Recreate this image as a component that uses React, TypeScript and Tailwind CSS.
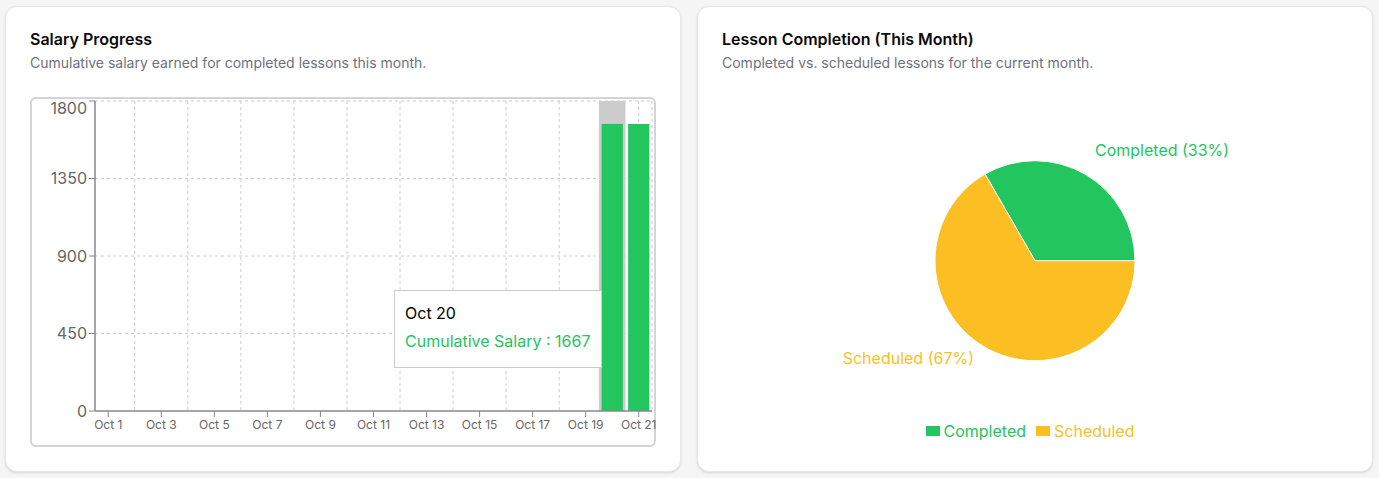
import React from "react";

const GREEN = "#22c55e";
const YELLOW = "#fbbf24";

// chart geometry (svg coords inside the bordered box)
const AXIS_X = 63;
const TOP = 2;
const BOTTOM = 312;
const RIGHT = 620;
const DAYS = 21;
const BAND = (RIGHT - AXIS_X) / DAYS;
const MAX = 1800;

const center = (i: number) => AXIS_X + (i + 0.5) * BAND;
const yOf = (v: number) => BOTTOM - (v / MAX) * (BOTTOM - TOP);

const salary: { [day: number]: number } = { 20: 1667, 21: 1667 };

function SalaryChart() {
  const yTicks = [0, 450, 900, 1350, 1800];
  const gridX = [1, 3, 5, 7, 9, 11, 13, 15, 17, 19, 20].map(center);
  const barW = BAND * 0.8;

  return (
    <div className="relative h-[350px] w-full rounded-md border-2 border-[#d4d4d8]">
      <svg width={622} height={346} className="block overflow-visible">
        {/* grid */}
        {yTicks.filter(t => t > 0).map(t => (
          <line key={t} x1={AXIS_X} x2={RIGHT} y1={yOf(t)} y2={yOf(t)} stroke="#ccc" strokeDasharray="3 3" />
        ))}
        {gridX.map((x, i) => (
          <line key={i} x1={x} x2={x} y1={TOP} y2={BOTTOM} stroke="#ccc" strokeDasharray="3 3" />
        ))}
        <line x1={RIGHT} x2={RIGHT} y1={TOP} y2={BOTTOM} stroke="#ccc" strokeDasharray="3 3" />

        {/* hover cursor */}
        <rect x={AXIS_X + 19 * BAND} y={TOP} width={BAND} height={BOTTOM - TOP} fill="#ccc" />

        {/* bars */}
        {Object.entries(salary).map(([day, v]) => {
          const i = Number(day) - 1;
          return (
            <rect key={day} x={center(i) - barW / 2} y={yOf(v)} width={barW} height={BOTTOM - yOf(v)} fill={GREEN} />
          );
        })}

        {/* y axis */}
        <line x1={AXIS_X} x2={AXIS_X} y1={TOP} y2={BOTTOM} stroke="#888" strokeWidth={1.5} />
        {yTicks.map(t => (
          <g key={t}>
            <line x1={AXIS_X - 6} x2={AXIS_X} y1={yOf(t)} y2={yOf(t)} stroke="#888" />
            <text
              x={55}
              y={t === MAX ? 9 : yOf(t)}
              dy="0.355em"
              textAnchor="end"
              fontSize={16}
              fill="#666"
            >
              {t}
            </text>
          </g>
        ))}

        {/* x axis */}
        <line x1={AXIS_X} x2={RIGHT} y1={BOTTOM} y2={BOTTOM} stroke="#888" strokeWidth={1.5} />
        {Array.from({ length: 11 }, (_, k) => k * 2).map(i => (
          <g key={i}>
            <line x1={center(i)} x2={center(i)} y1={BOTTOM} y2={BOTTOM + 6} stroke="#888" />
            <text x={center(i)} y={325.5} dy="0.355em" textAnchor="middle" fontSize={12} fill="#666">
              Oct {i + 1}
            </text>
          </g>
        ))}
      </svg>

      {/* tooltip */}
      <div className="absolute left-[362px] top-[191px] whitespace-nowrap border border-[#ccc] bg-white px-[10px] pb-[14px] pt-[10px] text-base">
        <p className="leading-6 text-black">Oct 20</p>
        <p className="pt-1 leading-6 text-[#22c55e]">Cumulative Salary : 1667</p>
      </div>
    </div>
  );
}

function CompletionPie() {
  const cx = 313;
  const cy = 163.7;
  const r = 100;
  const ax = cx + r * Math.cos((2 * Math.PI) / 3);
  const ay = cy - r * Math.sin((2 * Math.PI) / 3);

  return (
    <div className="flex h-[350px] flex-col">
      <svg width="100%" height={322} className="block">
        <path d={`M${cx},${cy} L${cx + r},${cy} A${r},${r} 0 0,0 ${ax},${ay} Z`} fill={GREEN} stroke="#fff" />
        <path d={`M${cx},${cy} L${ax},${ay} A${r},${r} 0 1,0 ${cx + r},${cy} Z`} fill={YELLOW} stroke="#fff" />
        <text x={373} y={53.5} dy="0.355em" fontSize={16} fill={GREEN}>
          Completed (33%)
        </text>
        <text x={252} y={261.5} dy="0.355em" textAnchor="end" fontSize={16} fill={YELLOW}>
          Scheduled (67%)
        </text>
      </svg>
      <div className="flex h-6 items-center justify-center text-base">
        <div className="mr-[10px] flex items-center">
          <span className="mr-1 h-[10.5px] w-[14px] bg-[#22c55e]" />
          <span className="text-[#22c55e]">Completed</span>
        </div>
        <div className="mr-[10px] flex items-center">
          <span className="mr-1 h-[10.5px] w-[14px] bg-[#fbbf24]" />
          <span className="text-[#fbbf24]">Scheduled</span>
        </div>
      </div>
    </div>
  );
}

function Card({ title, description, children }: { title: string; description: string; children: React.ReactNode }) {
  return (
    <div className="rounded-xl border border-[#e5e7eb] bg-white shadow-sm">
      <div className="flex flex-col gap-1.5 p-6">
        <h3 className="text-base font-semibold leading-none text-[#0a0a0a]">{title}</h3>
        <p className="text-sm text-[#6b7280]">{description}</p>
      </div>
      <div className="px-6 pb-6">{children}</div>
    </div>
  );
}

export default function App() {
  return (
    <div className="min-h-screen bg-[#f5f5f5] p-[6px] pl-[5px] font-['Inter',sans-serif]">
      <div className="grid grid-cols-2 gap-4">
        <Card title="Salary Progress" description="Cumulative salary earned for completed lessons this month.">
          <SalaryChart />
        </Card>
        <Card title="Lesson Completion (This Month)" description="Completed vs. scheduled lessons for the current month.">
          <CompletionPie />
        </Card>
      </div>
    </div>
  );
}
